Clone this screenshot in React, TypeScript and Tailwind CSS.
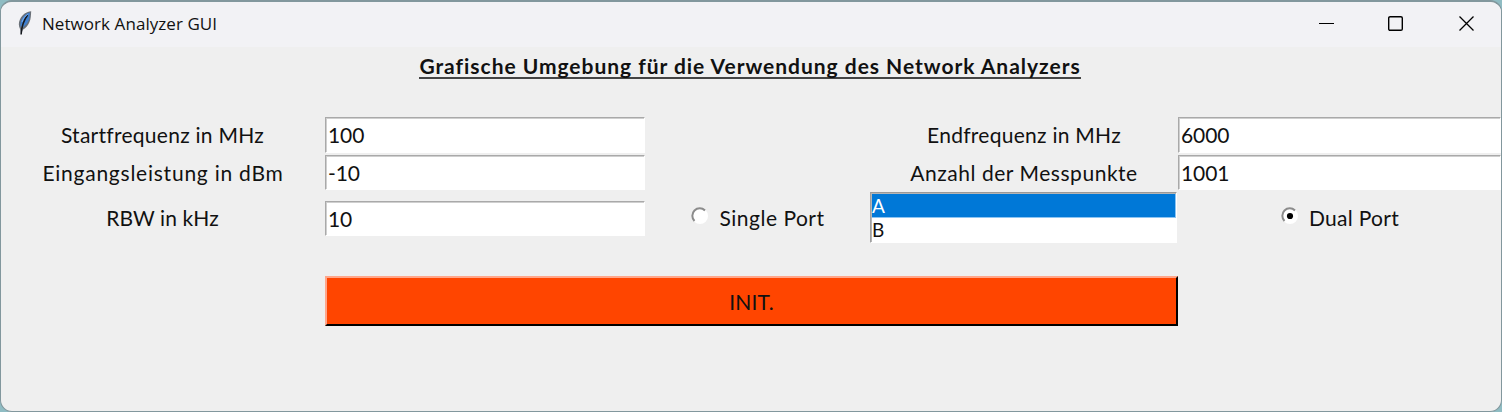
import React from "react";

function Feather() {
  return (
    <svg width="16" height="26" viewBox="0 0 16 26" className="mr-[8px] mb-[3px]">
      <path d="M15.2 1.2C10.4 1.6 6.4 4.4 4 9.3C2.4 12.8 2.4 16 4.2 19.4L5 24.6L6.8 19.8C10.2 17.8 12 15.2 13.4 12.2C15 8.8 14.9 5 15.2 1.2Z" fill="#6a7078" />
      <path d="M13.8 2.6C10.2 3.6 7 6.3 5.2 10.2C4.1 13 4.2 15.4 4.9 17.5L9 8.5L6.5 17.8C9.8 15.8 11.4 13.2 12.6 10.6C13.8 7.8 13.8 5 13.8 2.6Z" fill="#3f80d0" />
      <path d="M11.6 5C7.8 10 5.6 16 5.1 24.5" fill="none" stroke="#14181e" strokeWidth="1.5" />
      <path d="M11.8 4.2C9 6 7.2 8.6 6 12" fill="none" stroke="#7fb0ee" strokeWidth="1" />
    </svg>
  );
}

function TitleBar() {
  return (
    <header className="flex h-[45px] shrink-0 items-center bg-[#f2f2f5] pl-[15px]">
      <Feather />
      <h1 className="flex-1 pb-[2px] pl-[2px] font-['Open_Sans',sans-serif] text-[17px] tracking-[0.06px] whitespace-nowrap">
        Network Analyzer GUI
      </h1>
      <svg width="16" height="16" viewBox="0 0 16 16" className="mr-[53px] mb-[2px]" fill="none" stroke="#000">
        <path d="M0 7.5H15" />
      </svg>
      <svg width="16" height="16" viewBox="0 0 16 16" className="mr-[55px] mb-[2px]" fill="none" stroke="#000" strokeWidth="1.4">
        <rect x="0.7" y="0.7" width="13.6" height="13.6" rx="1.4" />
      </svg>
      <svg width="16" height="16" viewBox="0 0 16 16" className="mr-[26px] mb-[2px]" fill="none" stroke="#000" strokeWidth="1.3">
        <path d="M0.5 0.5L14.5 14.5M14.5 0.5L0.5 14.5" />
      </svg>
    </header>
  );
}

function Label({ children, className }: { children: string; className: string }) {
  return <div className={`self-center whitespace-nowrap text-center ${className}`}>{children}</div>;
}

function Entry({ value, className }: { value: string; className: string }) {
  return (
    <input
      defaultValue={value}
      className={`block h-[35px] min-w-0 rounded-none border border-t-[#a9a9a9] border-r-white border-b-white border-l-[#a9a9a9] bg-white pl-[2px] tracking-[-0.1px] shadow-[inset_1px_1px_0_#cfcfcf] outline-none ${className}`}
    />
  );
}

function Radio({ label, checked, className }: { label: string; checked?: boolean; className: string }) {
  return (
    <label className={`flex items-center justify-center whitespace-nowrap ${className}`}>
      <svg width="18" height="18" viewBox="0 0 18 18" className="mr-[10px] mb-[4px]">
        <circle cx="9" cy="9" r="8" fill="#fff" />
        <path d="M3.5 14A7.2 7.2 0 0 1 14 3.5" fill="none" stroke="#8b8b8b" strokeWidth="2" />
        {checked && <circle cx="9" cy="9" r="3.1" fill="#000" />}
      </svg>
      {label}
    </label>
  );
}

export default function App() {
  return (
    <div className="h-[412px] w-[1502px] overflow-hidden bg-[#8fbcc3] font-[Lato,sans-serif] text-[21px] text-[#111]">
      <div className="flex h-full flex-col overflow-hidden rounded-[12px] border border-t-2 border-[#82979d] bg-[#efefef]">
        <TitleBar />
        <main className="flex flex-col">
          <h2 className="mx-auto h-[70px] pt-[7px] pr-[2px] text-[21px] leading-[24px] font-bold whitespace-nowrap">
            <span className="inline-block h-[25px] border-b-2 border-[#444] tracking-[0.97px]">
              Grafische Umgebung für die Verwendung des Network Analyzers
            </span>
          </h2>
          <div className="grid grid-cols-[324px_321px_224px_308px_323px] grid-rows-[37px_38px_52px_32px_50px]">
            <Label className="pr-px pb-[2px] tracking-[0.27px]">Startfrequenz in MHz</Label>
            <Entry value="100" className="mr-px h-[36px] pb-px" />
            <Label className="col-start-4 pb-[2px] tracking-[0.27px]">Endfrequenz in MHz</Label>
            <Entry value="6000" className="h-[36px] pb-px" />
            <Label className="tracking-[0.76px]">Eingangsleistung in dBm</Label>
            <Entry value="-10" className="mt-px mr-px" />
            <Label className="col-start-4 tracking-[0.54px]">Anzahl der Messpunkte</Label>
            <Entry value="1001" className="mt-px" />
            <Label className="pr-px tracking-[0.1px]">RBW in kHz</Label>
            <Entry value="10" className="mr-px self-center pt-px" />
            <Radio label="Single Port" className="tracking-[0.5px]" />
            <ul className="mr-[1px] h-[51px] border border-t-[#999] border-r-white border-b-white border-l-[#a0a0a0] bg-white pt-px text-[19px] leading-[24px] shadow-[inset_1px_1px_0_#b5b5b5]">
              <li className="ml-px h-[24px] border-r border-b border-[#8cc4f2] bg-[#0078d7] text-white">A</li>
              <li className="h-[24px] pl-px">B</li>
            </ul>
            <Radio label="Dual Port" checked className="pl-px tracking-[0.3px]" />
            <button className="col-span-3 col-start-2 row-start-5 border-2 border-t-[#ffa68a] border-r-black border-b-black border-l-[#ffa68a] bg-[#ff4500] pt-px text-center tracking-[0.2px]">
              INIT.
            </button>
          </div>
        </main>
      </div>
    </div>
  );
}
